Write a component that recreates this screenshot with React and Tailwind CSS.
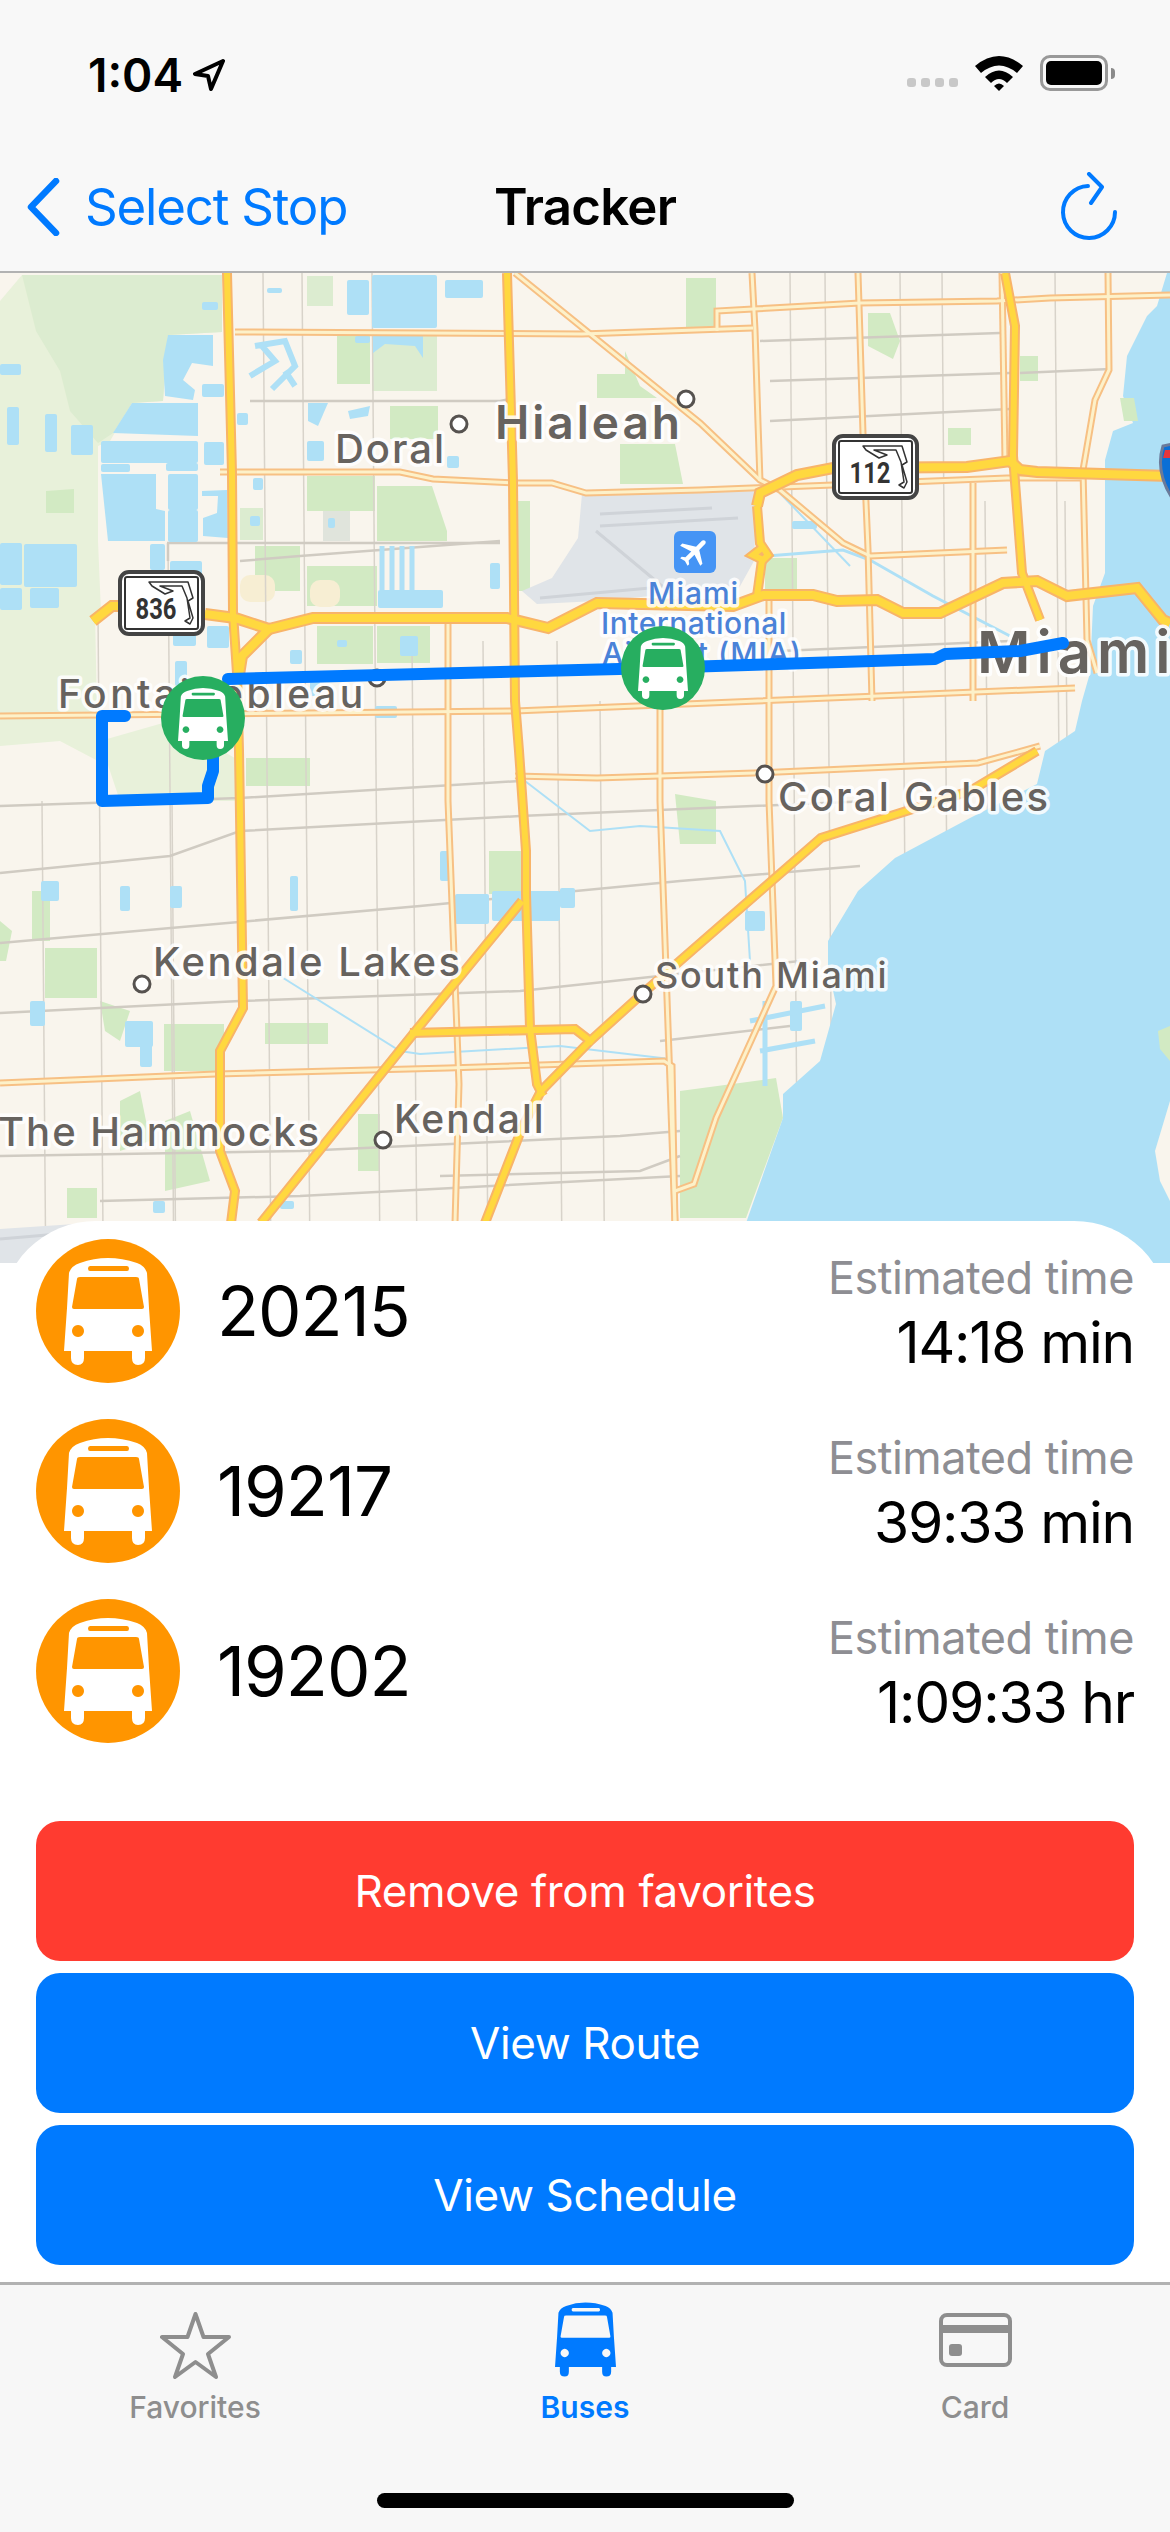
import React from "react";

const font = "font-['Inter','Liberation_Sans',sans-serif]";

// map data, in page pixels (map starts at y=272)
const paleGreen = [
  "0,300 22,274 222,274 222,331 168,334 163,400 132,402 110,440 98,445 98,540 101,612 0,612 0,420",
  "0,612 95,612 98,760 60,740 0,745",
  "100,740 170,720 240,760 240,800 120,800",
];
const softGreen = [
  "22,274 222,274 222,331 168,334 163,400 132,402 113,432 98,442 70,410 60,370 36,330",
  "307,275 333,275 333,305 307,305", "372,335 437,335 437,390 372,390", "240,507 263,507 263,539 240,539",
];
const midGreen = [
  "337,335 370,335 370,383 337,383", "390,405 438,405 438,438 390,438", "377,485 432,485 447,530 447,540 377,540",
  "307,475 375,475 375,510 307,510", "307,565 377,565 377,605 307,605", "255,545 300,545 300,590 255,590",
  "317,625 373,625 373,663 317,663", "377,625 430,625 430,662 377,662",
  "46,490 74,488 74,512 46,512", "686,277 716,277 716,327 686,327",
  "620,443 675,443 683,483 620,483", "597,373 625,373 625,350 640,385 657,397 597,397",
  "868,312 890,312 900,340 893,358 868,345", "948,427 971,427 971,444 948,444", "1020,355 1038,355 1038,380 1020,380",
  "765,557 797,557 797,590 765,590", "246,757 310,757 310,785 246,785",
  "675,793 716,800 716,843 680,843", "489,850 522,850 522,893 489,893",
  "164,1023 224,1023 224,1070 164,1070", "265,1022 328,1022 328,1043 265,1043",
  "680,1090 776,1077 783,1117 746,1217 680,1217", "358,1113 380,1113 380,1170 358,1170",
  "67,1187 97,1187 97,1217 67,1217", "45,947 97,947 97,997 45,997",
  "32,890 50,890 50,940 32,940", "510,500 530,500 530,590 510,590",
  "0,920 12,930 6,960 0,960", "120,1100 140,1090 150,1140 120,1150", "165,1120 190,1110 210,1180 165,1190",
  "100,1000 130,1010 120,1040 105,1030",
];
const lakePolys = [
  "168,334 213,334 213,365 192,362 183,379 195,389 193,399 165,395 163,359",
  "113,432 132,402 198,402 198,435",
  "101,473 156,473 156,508 165,510 165,540 108,540",
  "202,490 227,489 228,537 203,535 203,517 217,512 218,495 202,495",
  "373,335 423,335 423,357 415,345 385,343 373,352",
  "308,402 328,402 318,425 308,420",
  "348,410 370,405 368,415 350,418",
];
const lakes = [
  [202, 383, 22, 13], [202, 301, 16, 8], [0, 363, 21, 11], [7, 406, 12, 38],
  [45, 413, 12, 38], [71, 424, 22, 30], [101, 440, 97, 22], [166, 462, 32, 8],
  [101, 463, 29, 8], [204, 441, 20, 23], [168, 473, 30, 36], [168, 509, 30, 32],
  [0, 542, 22, 42], [24, 543, 53, 43], [0, 587, 22, 22], [30, 587, 29, 20],
  [150, 543, 15, 26], [170, 560, 32, 15], [253, 477, 10, 12], [347, 279, 22, 35],
  [372, 274, 65, 53], [445, 279, 38, 18], [267, 287, 15, 5], [355, 335, 15, 7],
  [307, 440, 17, 20], [447, 455, 12, 12], [490, 562, 10, 26], [328, 517, 7, 10],
  [250, 515, 10, 10], [237, 412, 11, 12], [173, 625, 23, 20], [207, 625, 22, 22],
  [290, 649, 12, 14], [337, 639, 10, 7], [400, 635, 18, 20], [378, 589, 65, 18],
  [792, 520, 25, 8],
  [455, 893, 34, 30], [492, 890, 68, 30], [560, 887, 15, 20], [440, 850, 10, 30],
  [290, 875, 8, 35], [41, 880, 18, 20], [30, 1000, 15, 25], [375, 705, 22, 12],
  [175, 660, 12, 25], [310, 680, 10, 15], [170, 885, 12, 22], [120, 885, 10, 25],
  [125, 1020, 28, 26], [140, 1040, 12, 26], [745, 910, 20, 20], [153, 1200, 12, 12],
  [280, 1200, 14, 8], [790, 1000, 12, 30],
];
const gridX = [
  [42, 800], [98, 612], [168, 542], [172, 800], [263, 272], [302, 272], [372, 272], [412, 640], [483, 640],
  [557, 640], [600, 700], [790, 272], [825, 272], [900, 272], [942, 272], [985, 500], [1055, 272], [1065, 500],
];
const gridY = [
  "250,400 500,400 510,398", "167,542 500,542", "168,542 168,560",
  "0,805 240,797 520,780", "0,872 170,855 240,830 520,815 870,800",
  "0,942 420,905 680,880 860,865", "0,1012 240,1000 520,990 800,960",
  "240,560 300,555 500,540", "770,380 1010,372", "760,340 1000,332", "770,420 1010,408", "1020,372 1110,368",
  "0,1155 300,1150 620,1135 680,1130", "440,1175 640,1170 680,1155",
  "780,650 1010,640", "660,1040 790,1025", "100,1200 300,1195 680,1175",
];
const highways = [
  "227,272 232,472 233,612 237,672 239,750 243,1007 220,1050 220,1150 235,1190 231,1222",
  "507,272 513,480 515,700 519,750 526,850 526,893 530,1027 537,1083 543,1095",
  "1005,272 1015,325 1013,455 1022,572 1040,619",
  "1037,750 970,790 821,837 642,993 590,1040 541,1090 522,1127 485,1222",
  "522,900 418,1027 261,1222",
  "410,1032 575,1028 593,1042",
  "757,505 760,542 768,554 763,559 753,554 762,547",
  "762,559 757,595",
];
const thickHighways = [
  "93,620 112,605 119,605", "205,613 235,617 269,628 313,617 507,617 548,627 597,602 733,605 763,594 813,594 837,600 877,599 903,612 940,612 1003,582 1037,580 1067,595 1137,587 1163,619 1170,622",
  "757,505 760,492 797,474 833,467 967,466 1010,460 1020,469 1037,471 1170,475",
  "238,680 242,655 269,628",
];
const arterials = [
  "235,331 582,333 753,327", "717,330 717,310 753,308 860,302 997,300 1050,297 1170,294",
  "220,471 400,471 433,478 515,482 552,482 586,492 700,489 833,484 1007,477 1083,477",
  "0,715 515,710 1075,687", "515,775 597,777 754,772 978,762 1040,745",
  "0,1082 216,1073 448,1067 664,1060 672,1065 675,1222", "515,272 700,422 760,479 780,489 843,542 870,555",
  "448,620 448,800 459,1083 455,1222", "660,670 660,800 675,1222",
  "752,272 755,329 758,422 760,480", "769,600 769,800 776,985 716,1117 694,1183 675,1190",
  "858,272 863,432 868,548 872,700", "973,482 973,700",
  "1002,272 1005,460", "1108,272 1109,369 1095,399 1083,469 1087,639 1097,672", "870,555 1007,549",
];

function Bus({ className }) {
  return (
    <svg viewBox="0 0 88 107" className={className}>
      <path
        fillRule="evenodd"
        fill="currentColor"
        d="M0 93 L3 50 L5 15 Q7 8 16 5 Q30 0 44 0 Q58 0 73 5 Q81 8 83 15 L85 50 L88 93 L81 93 L81 100 Q81 107 74 107 Q68 107 68 100 L68 93 L20 93 L20 100 Q20 107 14 107 Q7 107 7 100 L7 93 Z
           M13 21 Q13 19 16 19 L72 19 Q75 19 75 21 L80 49 Q80 51 78 51 L10 51 Q8 51 8 49 Z
           M26 8 L63 8 Q65 8 65 10.500 Q65 13 63 13 L26 13 Q24 13 24 10.500 Q24 8 26 8 Z
           M14 67 a6 6 0 1 0 0.010 0 Z M74 67 a6 6 0 1 0 0.010 0 Z"
      />
    </svg>
  );
}

function Shield({ x, y, label }) {
  return (
    <g transform={`translate(${x} ${y})`}>
      <rect x="1" y="1" width="83" height="62" rx="9" fill="#fff" stroke="#444" strokeWidth="4" />
      <rect x="6" y="6" width="73" height="52" rx="2" fill="none" stroke="#333" strokeWidth="2" />
      <path d="M30 11 L69 11 L74 27 L69 30 L74 47 L71 53 L66 50 L71 47 L68 27 L63 15 L41 15 L54 20 L46 23 L33 15 Z" fill="none" stroke="#333" strokeWidth="1.500" strokeLinejoin="round" />
      <text x="37" y="48" textAnchor="middle" fontSize="30" fontWeight="700" fill="#333" fontFamily="Roboto, sans-serif" textLength="41" lengthAdjust="spacingAndGlyphs">
        {label}
      </text>
    </g>
  );
}

function Label({ x, y, size, spacing = 2, weight = 500, color = "#67635f", children }) {
  return (
    <text
      x={x}
      y={y}
      fontSize={size}
      fontWeight={weight}
      letterSpacing={spacing}
      fill={color}
      stroke="#fff"
      strokeOpacity="0.85"
      strokeWidth="7"
      strokeLinejoin="round"
      fontFamily="Inter, sans-serif"
      className="[paint-order:stroke]"
    >
      {children}
    </text>
  );
}

function GreenMarker({ x, y }) {
  return (
    <g>
      <circle cx={x} cy={y} r="42" fill="#27ae60" />
      <svg x={x - 25} y={y - 30} width="50" height="61" viewBox="0 0 88 107" className="text-white">
        <Bus />
      </svg>
    </g>
  );
}

function MapView() {
  const dots = [[686, 398], [459, 423], [377, 677], [765, 773], [142, 983], [643, 993], [383, 1139]];
  return (
    <svg viewBox="0 272 1170 990" className="block w-[1170px] h-[990px] shrink-0 bg-[#f9f5ed]">
      {paleGreen.map((p) => <polygon key={p} points={p} fill="#e8f1da" />)}
      {softGreen.map((p) => <polygon key={p} points={p} fill="#dcecd0" />)}
      {midGreen.map((p) => <polygon key={p} points={p} fill="#d2eac3" />)}
      <rect x="240" y="574" width="35" height="27" rx="10" fill="#f7eed3" />
      <rect x="310" y="579" width="30" height="27" rx="10" fill="#f7eed3" />
      <rect x="323" y="510" width="27" height="30" fill="#e0e4dc" />
      {/* minor roads */}
      {gridX.map(([x, y]) => (
        <path key={x} d={`M${x} ${y} L${x + ((1262 - y) * 8) / 990} 1262`} stroke="#d8d3ca" strokeWidth="1.500" />
      ))}
      {gridY.map((p) => <polyline key={p} points={p} fill="none" stroke="#d0cbc2" strokeWidth="2.500" />)}
      {/* bay */}
      <polygon
        fill="#aee0f6"
        points="1167,272 1157,305 1147,315 1127,355 1123,395 1133,422 1113,430 1105,459 1105,572 1093,605 1090,672 1082,700 1075,730 1045,750 1037,783 970,817 895,857 858,890 828,940 828,967 836,1003 820,1060 783,1093 783,1117 746,1222 746,1262 1170,1262 1170,272"
      />
      <polygon fill="#d2eac3" points="1120,397 1134,397 1138,420 1124,420" />
      <polygon fill="#d2eac3" points="1158,1030 1170,1025 1170,1060 1160,1048" />
      <polygon fill="#f9f5ed" points="1170,1100 1155,1150 1160,1180 1170,1200" />
      {lakes.map(([x, y, w, h]) => <rect key={`${x}-${y}`} x={x} y={y} width={w} height={h} rx="2" fill="#aee0f6" />)}
      {lakePolys.map((p) => <polygon key={p} points={p} fill="#aee0f6" />)}
      {/* stripes of the ponds and the wetland */}
      <path d="M382 545 L382 589 M392 545 L392 589 M402 545 L402 589 M412 545 L412 589" stroke="#aee0f6" strokeWidth="5" />
      <path d="M255 345 L285 340 L295 365 L272 388 M250 375 L275 360 L262 345 M285 370 L295 385" stroke="#aee0f6" strokeWidth="6" fill="none" />
      {/* airports */}
      <polygon fill="#e0e4e8" points="582,493 757,490 754,560 739,587 597,600 537,603 522,590 552,577 578,537" />
      <path d="M600 513 L712 507 M600 525 L738 517 M540 597 L650 587 M596 530 L680 600" stroke="#cfd3d8" strokeWidth="3" fill="none" />
      <polygon fill="#e0e4e8" points="0,1228 90,1222 40,1262 0,1262" />
      <path d="M0 1238 L70 1232" stroke="#cfd3d8" strokeWidth="3" />
      {/* canals */}
      <path d="M767 555 L843 549 L870 559 L933 595 L1010 635" fill="none" stroke="#aee0f6" strokeWidth="3" />
      <path d="M777 489 L850 565" fill="none" stroke="#aee0f6" strokeWidth="2" />
      <path d="M280 975 L400 1050 L420 1053 L560 1045 L670 1058 M525 780 L590 830 L640 825 L720 830 L745 880 L750 960" fill="none" stroke="#aee0f6" strokeWidth="2" />
      <path d="M750 1020 L825 1005 M760 1050 L815 1040 M765 1000 L765 1085" fill="none" stroke="#aee0f6" strokeWidth="5" />
      {/* arterials and highways */}
      {arterials.map((p) => <polyline key={p} points={p} fill="none" stroke="#f7c084" strokeWidth="7" />)}
      {arterials.map((p) => <polyline key={p} points={p} fill="none" stroke="#fdf1c9" strokeWidth="3" />)}
      {thickHighways.map((p) => <polyline key={p} points={p} fill="none" stroke="#f8b469" strokeWidth="12" />)}
      {highways.map((p) => <polyline key={p} points={p} fill="none" stroke="#f8b469" strokeWidth="10" />)}
      {thickHighways.map((p) => <polyline key={p} points={p} fill="none" stroke="#ffd83f" strokeWidth="8" />)}
      {highways.map((p) => <polyline key={p} points={p} fill="none" stroke="#ffd83f" strokeWidth="6" />)}

      {dots.map(([x, y]) => <circle key={x} cx={x} cy={y} r="8" fill="#fff" stroke="#56524f" strokeWidth="3" />)}
      <Label x={495} y={438} size={46} spacing={3} weight={600}>Hialeah</Label>
      <Label x={335} y={462} size={40}>Doral</Label>
      <Label x={58} y={707} size={39} spacing={3.5}>Fontainebleau</Label>
      <Label x={778} y={810} size={40} spacing={2.300}>Coral Gables</Label>
      <Label x={153} y={975} size={40} spacing={2.500}>Kendale Lakes</Label>
      <Label x={655} y={987} size={36} spacing={1.800}>South Miami</Label>
      <Label x={-2} y={1145} size={40} spacing={2}>The Hammocks</Label>
      <Label x={394} y={1132} size={39} spacing={2}>Kendall</Label>
      <Label x={648} y={603} size={30} spacing={1} color="#4a82d8">Miami</Label>
      <Label x={601} y={633} size={30} spacing={0.5} color="#4a82d8">International</Label>
      <Label x={602} y={663} size={30} spacing={1} color="#4a82d8">Airport (MIA)</Label>
      <Label x={977} y={672} size={58} spacing={6} weight={600}>Miami</Label>

      <rect x="674" y="530" width="42" height="42" rx="6" fill="#4594f5" />
      <g transform="translate(677 533) scale(1.500) rotate(45 12 12)">
        <path fill="#fff" d="M21 16v-2l-8-5V3.500c0-.83-.67-1.500-1.500-1.500S10 2.670 10 3.500V9l-8 5v2l8-2.500V19l-2 1.500V22l3.500-1 3.500 1v-1.500L13 19v-5.500l8 2.500z" />
      </g>
      <Shield x={119} y={570} label="836" />
      <Shield x={833} y={434} label="112" />
      <path d="M1172 443 L1163 445 Q1155 470 1172 497 Z" fill="#0a6fd6" stroke="#6a7a9a" strokeWidth="3" />
      <path d="M1172 449 L1165 449 L1163 457 L1172 457 Z" fill="#e8363c" />

      {/* route */}
      <polyline
        points="125,715 102,715 102,800 208,797 208,785 213,770 213,750"
        fill="none" stroke="#007aff" strokeWidth="12" strokeLinecap="round" strokeLinejoin="round"
      />
      <polyline
        points="228,678 619,668 935,658 945,653 1020,650 1063,642"
        fill="none" stroke="#007aff" strokeWidth="12" strokeLinecap="round" strokeLinejoin="round"
      />
      <GreenMarker x={203} y={717} />
      <GreenMarker x={663} y={667} />
    </svg>
  );
}

function StatusBar() {
  return (
    <div className="h-[161px] flex items-start justify-between pl-[88px] pr-[55px] pt-[50px]">
      <div className="flex items-center gap-[10px] mt-[2px]">
        <span className="text-[46px] leading-[46px] font-semibold text-black">1:04</span>
        <svg viewBox="0 0 32 32" className="w-[32px] h-[32px]">
          <path d="M30 2 L2 15 L15 17 L18 30 Z" fill="none" stroke="#000" strokeWidth="4" strokeLinejoin="round" />
        </svg>
      </div>
      <div className="flex items-center mt-[5px]">
        <div className="flex gap-[5px] mr-[17px] mt-[18px]">
          <div className="w-[9px] h-[9px] rounded-[3px] bg-[#c8c8c8]" />
          <div className="w-[9px] h-[9px] rounded-[3px] bg-[#c8c8c8]" />
          <div className="w-[9px] h-[9px] rounded-[3px] bg-[#c8c8c8]" />
          <div className="w-[9px] h-[9px] rounded-[3px] bg-[#c8c8c8]" />
        </div>
        <svg viewBox="0 0 48 36" className="w-[48px] h-[36px] mr-[17px]">
          <path d="M0 11 Q24 -9 48 11 L42 18 Q24 3 6 18 Z" fill="#000" />
          <path d="M10 22 Q24 9 38 22 L32 28 Q24 20 16 28 Z" fill="#000" />
          <path d="M19 31 Q24 26 29 31 L24 36 Z" fill="#000" />
        </svg>
        <div className="w-[68px] h-[36px] rounded-[10px] border-[3px] border-[#999] p-[3px]">
          <div className="w-full h-full rounded-[5px] bg-black" />
        </div>
        <div className="w-[4px] h-[11px] rounded-r-[4px] bg-[#8a8a8a] ml-[3px]" />
      </div>
    </div>
  );
}

function NavBar() {
  return (
    <div className="grid grid-cols-[1fr_auto_1fr] items-center px-[26px] h-[92px]">
      <div className="flex items-center gap-[25px]">
        <svg viewBox="0 0 34 58" className="w-[34px] h-[58px]">
          <path d="M30 3 L5 29 L30 55" fill="none" stroke="#007aff" strokeWidth="6.500" strokeLinecap="round" strokeLinejoin="round" />
        </svg>
        <span className="text-[51px] leading-[60px] text-[#007aff] tracking-[-1.2px]">Select Stop</span>
      </div>
      <span className="text-[51px] leading-[60px] font-semibold text-black tracking-[-0.8px]">Tracker</span>
      <div className="flex justify-end pr-[26px]">
        <svg viewBox="0 0 58 70" className="w-[58px] h-[70px]">
          <path d="M28 14 A26 26 0 1 0 55 40" fill="none" stroke="#007aff" strokeWidth="4" strokeLinecap="round" />
          <path d="M29 2 L42 15 L31 31" fill="none" stroke="#007aff" strokeWidth="4" strokeLinecap="round" strokeLinejoin="round" />
        </svg>
      </div>
    </div>
  );
}

function BusRow({ number, time }) {
  return (
    <div className="h-[144px] flex items-center pl-[36px] pr-[36px]">
      <div className="w-[144px] h-[144px] rounded-full bg-[#ff9500] flex items-center justify-center text-white">
        <Bus className="w-[88px] h-[107px]" />
      </div>
      <span className="ml-[37px] text-[69px] leading-none text-black tracking-[-1px]">{number}</span>
      <div className="ml-auto text-right">
        <div className="text-[45px] leading-[58px] text-[#8e8e93] tracking-[-0.5px] mt-[3px]">Estimated time</div>
        <div className="text-[57px] leading-[68px] text-black tracking-[-1.2px] mt-[2px]">{time}</div>
      </div>
    </div>
  );
}

function ActionButton({ color, children }) {
  return (
    <button className={`h-[140px] w-full rounded-[24px] text-white text-[44px] tracking-[-0.4px] ${color}`}>
      {children}
    </button>
  );
}

function TabBar() {
  return (
    <div className="flex-1 relative bg-[#f7f7f7] border-t-[3px] border-[#b2b2b2] grid grid-cols-3 items-start">
      <div className="flex flex-col items-center pt-[27px]">
        <svg viewBox="0 0 71 67" className="w-[71px] h-[67px]">
          <path d="M35.500 2 L43.500 25 L69 25 L48 42 L56 65 L35.500 50 L15 65 L23 42 L2 25 L27.500 25 Z" fill="none" stroke="#8e8e8e" strokeWidth="4" strokeLinejoin="round" />
        </svg>
        <span className="mt-[10px] text-[30px] leading-[36px] font-medium text-[#8e8e8e]">Favorites</span>
      </div>
      <div className="flex flex-col items-center pt-[17px] text-[#007aff]">
        <Bus className="w-[61px] h-[75px]" />
        <span className="mt-[12px] text-[30px] leading-[36px] font-semibold">Buses</span>
      </div>
      <div className="flex flex-col items-center pt-[28px]">
        <svg viewBox="0 0 73 54" className="w-[73px] h-[54px]">
          <rect x="2" y="2" width="69" height="50" rx="6" fill="none" stroke="#8e8e8e" strokeWidth="4" />
          <rect x="2" y="12" width="69" height="8" fill="#8e8e8e" />
          <rect x="10" y="31" width="13" height="12" rx="3" fill="#8e8e8e" />
        </svg>
        <span className="mt-[22px] text-[30px] leading-[36px] font-medium text-[#8e8e8e]">Card</span>
      </div>
      <div className="absolute left-[377px] top-[208px] w-[417px] h-[15px] rounded-full bg-black" />
    </div>
  );
}

export default function App() {
  return (
    <div className={`w-[1170px] h-[2532px] overflow-hidden flex flex-col bg-white ${font}`}>
      <header className="h-[273px] shrink-0 bg-[#f8f8f8] border-b-[2px] border-[#b2b2b2]">
        <StatusBar />
        <NavBar />
      </header>
      <MapView />
      <section className="relative -mt-[42px] h-[1061px] shrink-0 bg-white rounded-t-[96px] pt-[18px]">
        <div className="flex flex-col gap-[36px]">
          <BusRow number="20215" time="14:18 min" />
          <BusRow number="19217" time="39:33 min" />
          <BusRow number="19202" time="1:09:33 hr" />
        </div>
        <div className="flex flex-col gap-[12px] px-[36px] mt-[78px]">
          <ActionButton color="bg-[#ff3b30]">Remove from favorites</ActionButton>
          <ActionButton color="bg-[#007aff]">View Route</ActionButton>
          <ActionButton color="bg-[#007aff]">View Schedule</ActionButton>
        </div>
      </section>
      <TabBar />
    </div>
  );
}
